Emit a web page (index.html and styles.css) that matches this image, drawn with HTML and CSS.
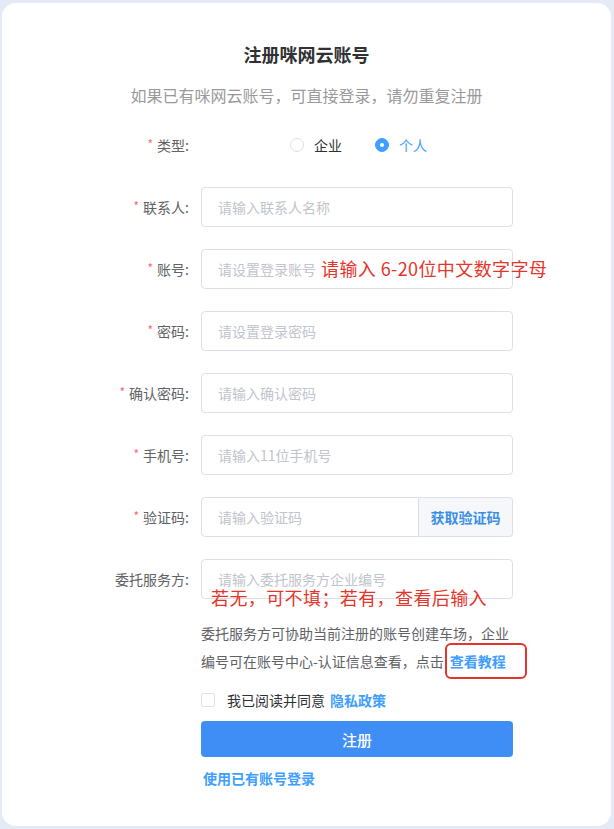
FILE: index.html
```html
<!DOCTYPE html>
<html lang="zh-CN">
<head>
  <meta charset="UTF-8" />
  <meta name="viewport" content="width=device-width, initial-scale=1.0">
  <title>注册咪网云账号</title>
  <link rel="stylesheet" href="styles.css">
</head>
<body>
  <div class="card">
    <h1>注册咪网云账号</h1>
    <p class="subtitle">如果已有咪网云账号，可直接登录，请勿重复注册</p>

    <div class="form">
      <!-- 类型 -->
      <div class="row">
        <label class="label required">类型:</label>
        <div class="radios">
          <span class="radio"><i class="dot"></i>企业</span>
          <span class="radio checked"><i class="dot"></i>个人</span>
        </div>
      </div>

      <div class="row">
        <label class="label required">联系人:</label>
        <input type="text" placeholder="请输入联系人名称" />
      </div>

      <div class="row">
        <label class="label required">账号:</label>
        <div class="field">
          <input type="text" placeholder="请设置登录账号" />
          <span class="note note-account">请输入 6-20位中文数字字母</span>
        </div>
      </div>

      <div class="row">
        <label class="label required">密码:</label>
        <input type="password" placeholder="请设置登录密码" />
      </div>

      <div class="row">
        <label class="label required">确认密码:</label>
        <input type="password" placeholder="请输入确认密码" />
      </div>

      <div class="row">
        <label class="label required">手机号:</label>
        <input type="text" placeholder="请输入11位手机号" />
      </div>

      <div class="row">
        <label class="label required">验证码:</label>
        <div class="group">
          <input type="text" placeholder="请输入验证码" />
          <button class="append">获取验证码</button>
        </div>
      </div>

      <div class="row">
        <label class="label">委托服务方:</label>
        <div class="field">
          <input type="text" placeholder="请输入委托服务方企业编号" />
          <span class="note note-agent">若无，可不填；若有，查看后输入</span>
        </div>
      </div>

      <div class="rest">
        <p class="desc">委托服务方可协助当前注册的账号创建车场，企业编号可在账号中心-认证信息查看，点击<a class="link boxed">查看教程</a></p>

        <div class="agree">
          <span class="checkbox"></span>
          <span>我已阅读并同意</span>
          <a class="link">隐私政策</a>
        </div>

        <button class="submit">注册</button>

        <a class="link login">使用已有账号登录</a>
      </div>
    </div>
  </div>
</body>
</html>
```

FILE: styles.css
```css
body {
  margin: 0;
  padding: 3px 3px 3px 2px;
  background: #e5ebf6;
  font-family: "Noto Sans CJK SC", "Noto Sans", sans-serif;
  color: #606266;
}
.card {
  height: 823px;
  box-sizing: border-box;
  background: #ffffff;
  border-radius: 14px;
  padding-top: 38px;
}
h1 {
  margin: 0;
  text-align: center;
  font-size: 18px;
  line-height: 26px;
  font-weight: 700;
  color: #303133;
}
.subtitle {
  margin: 16px 0 0;
  text-align: center;
  font-size: 16px;
  line-height: 24px;
  color: #98999c;
}
.form {
  margin: 18px 0 0 97px;
  width: 414px;
}
.row {
  display: grid;
  grid-template-columns: 90px 312px;
  column-gap: 12px;
  align-items: center;
  height: 40px;
  margin-bottom: 22px;
}
.label {
  text-align: right;
  font-size: 14px;
  color: #606266;
}
.label.required::before {
  content: "*";
  color: #f56c6c;
  font-size: 12px;
  margin-right: 4px;
  vertical-align: 2px;
}
.radios {
  display: flex;
  gap: 33px;
  padding-left: 89px;
  font-size: 14px;
  color: #303133;
}
.radio {
  display: flex;
  align-items: center;
  gap: 10px;
}
.radio .dot {
  width: 12px;
  height: 12px;
  border: 1px solid #dcdfe6;
  border-radius: 50%;
  box-sizing: content-box;
}
.radio.checked {
  color: #409eff;
}
.radio.checked .dot {
  background: #409eff;
  border-color: #409eff;
  position: relative;
}
.radio.checked .dot::after {
  content: "";
  position: absolute;
  left: 4px;
  top: 4px;
  width: 4px;
  height: 4px;
  border-radius: 50%;
  background: #fff;
}
input {
  width: 100%;
  height: 40px;
  box-sizing: border-box;
  border: 1px solid #dcdfe6;
  border-radius: 4px;
  padding: 0 16px;
  font-family: inherit;
  font-size: 14px;
  color: #606266;
  outline: none;
}
input::placeholder {
  color: #c0c4cc;
}
.field {
  position: relative;
}
.note {
  position: absolute;
  color: #e5352a;
  font-size: 18px;
  line-height: 24px;
  white-space: nowrap;
}
.note-account {
  left: 120px;
  top: 7px;
  letter-spacing: 0.4px;
}
.note-agent {
  left: 10px;
  top: 26px;
  letter-spacing: 0.4px;
}
.group {
  display: flex;
}
.group input {
  border-radius: 4px 0 0 4px;
}
.append {
  flex: 0 0 94px;
  height: 40px;
  border: 1px solid #dcdfe6;
  border-left: none;
  border-radius: 0 4px 4px 0;
  background: #f5f7fa;
  color: #3a8ee6;
  font-family: inherit;
  font-size: 14px;
  font-weight: 700;
}
.rest {
  margin-left: 102px;
  width: 312px;
}
.desc {
  margin: -2px 0 0;
  font-size: 14px;
  line-height: 28px;
  color: #606266;
}
.link {
  color: #409eff;
  font-weight: 700;
  text-decoration: none;
}
.boxed {
  position: relative;
  margin-left: 6px;
}
.boxed::after {
  content: "";
  position: absolute;
  left: -5px;
  right: -21px;
  top: -8px;
  bottom: -8px;
  border: 2px solid #e5352a;
  border-radius: 6px;
}
.agree {
  display: flex;
  align-items: center;
  margin-top: 15px;
  height: 20px;
  font-size: 14px;
  color: #303133;
}
.checkbox {
  width: 12px;
  height: 12px;
  border: 1px solid #dcdfe6;
  border-radius: 2px;
  margin-right: 12px;
}
.agree .link {
  margin-left: 5px;
}
.submit {
  display: block;
  width: 312px;
  height: 36px;
  margin-top: 11px;
  border: none;
  border-radius: 4px;
  background: #3f8ef6;
  color: #fff;
  font-family: inherit;
  font-size: 15px;
  font-weight: 500;
}
.login {
  display: block;
  margin: 11px 0 0 2px;
  font-size: 14px;
  line-height: 20px;
}
```
